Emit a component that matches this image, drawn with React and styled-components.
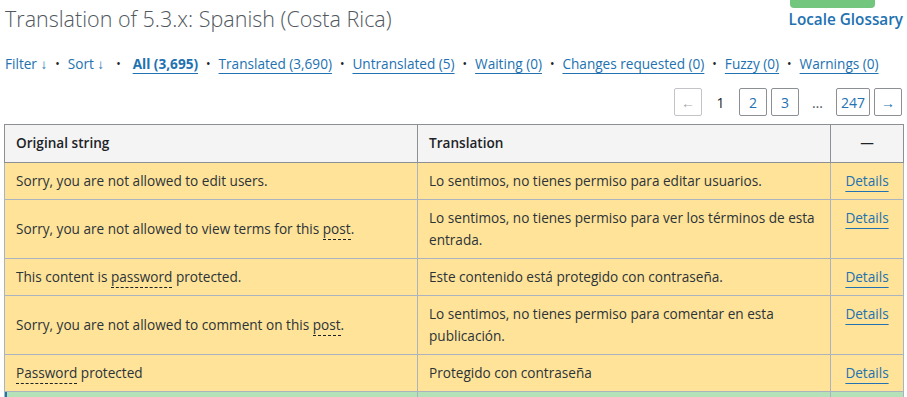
import React from 'react'
import styled, {createGlobalStyle} from 'styled-components'

const GlobalStyle = createGlobalStyle`
  body {
    margin: 0;
    background: #fff;
    font-family: "Open Sans", "Noto Sans", sans-serif;
    color: #3c434a;
  }
`

const Page = styled.div`
  padding: 0 4px;
  overflow: hidden;
  height: 397px;
`

const Head = styled.div`
  display: flex;
  justify-content: space-between;
  align-items: flex-start;
`

const Title = styled.h2`
  margin: 4px 0 0 1px;
  font-size: 21.5px;
  font-weight: 300;
  line-height: 30px;
  color: #50575e;
  white-space: nowrap;
`

const Glossary = styled.div`
  display: flex;
  flex-direction: column;
  align-items: flex-start;
  margin-right: 0;
`

const GreenTab = styled.div`
  width: 85px;
  height: 8px;
  margin-left: 1px;
  background: #72c67d;
  border-radius: 0 0 4px 4px;
`

const GlossaryLink = styled.a`
  font-size: 15.3px;
  font-weight: 600;
  line-height: 22px;
  color: #2271b1;
  text-decoration: none;
  white-space: nowrap;
`

const Filters = styled.div`
  display: flex;
  align-items: center;
  margin-top: 20px;
  padding-left: 1px;
  font-size: 13.6px;
  line-height: 20px;
  white-space: nowrap;
`

const FilterLink = styled.a`
  color: #2271b1;
  font-weight: ${p => (p.$bold ? 700 : 400)};
  text-decoration: ${p => (p.$plain ? 'none' : 'underline')};
  text-underline-offset: 4px;
  text-decoration-thickness: 1px;
`

const Dot = styled.span`
  margin: 0 ${p => p.$wide || 8}px;
  color: #1d2327;
  font-size: 12px;
`

const Pager = styled.div`
  display: flex;
  justify-content: flex-end;
  align-items: center;
  gap: 4px;
  margin-top: 14px;
  margin-right: 1px;
`

const PageButton = styled.span`
  box-sizing: border-box;
  min-width: 28px;
  height: 28px;
  padding: 0 4px;
  display: flex;
  align-items: center;
  justify-content: center;
  border: 1px solid ${p => (p.$disabled ? '#c3c4c7' : '#8c8f94')};
  border-radius: 2px;
  font-size: 14px;
  color: ${p => (p.$disabled ? '#a7aaad' : '#2271b1')};
`

const PageText = styled.span`
  width: 29px;
  text-align: center;
  font-size: 14px;
  color: ${p => (p.$muted ? '#50575e' : '#1d2327')};
`

const Table = styled.table`
  margin-top: 8px;
  width: 899px;
  border-collapse: collapse;
  table-layout: fixed;
  font-size: 13.6px;
  line-height: 22px;
  border: 1px solid #8c8f94;
`

const Th = styled.th`
  background: #f4f4f4;
  border: 1px solid #8c8f94;
  text-align: ${p => p.$align || 'left'};
  font-weight: 600;
  color: #1d2327;
  padding: 7px 11px 8px;
`

const Row = styled.tr`
  background: ${p => (p.$status === 'current' ? '#b5e1b9' : '#ffe399')};
  td:first-child {
    box-shadow: ${p => (p.$status === 'current' ? 'inset 2px 0 0 #2271b1' : 'none')};
  }
`

const Td = styled.td`
  border: 1px solid #aab3bf;
  padding: 7px 11px;
  vertical-align: ${p => p.$valign || 'top'};
  color: #2c3338;
  text-align: ${p => p.$align || 'left'};
`

const Glossed = styled.span`
  border-bottom: 1px dashed #1d2327;
  padding-bottom: 1px;
`

const Details = styled.a`
  color: #2271b1;
  text-decoration: underline;
  text-underline-offset: 5px;
  text-decoration-thickness: 1px;
`

const filters = [
  ['All (3,695)', true],
  ['Translated (3,690)'],
  ['Untranslated (5)'],
  ['Waiting (0)'],
  ['Changes requested (0)'],
  ['Fuzzy (0)'],
  ['Warnings (0)'],
]

const rows = [
  {
    original: <>Sorry, you are not allowed to edit users.</>,
    translation: 'Lo sentimos, no tienes permiso para editar usuarios.',
  },
  {
    original: <>Sorry, you are not allowed to view terms for this <Glossed>post</Glossed>.</>,
    translation: 'Lo sentimos, no tienes permiso para ver los términos de esta entrada.',
  },
  {
    original: <>This content is <Glossed>password</Glossed> protected.</>,
    translation: 'Este contenido está protegido con contraseña.',
  },
  {
    original: <>Sorry, you are not allowed to comment on this <Glossed>post</Glossed>.</>,
    translation: 'Lo sentimos, no tienes permiso para comentar en esta publicación.',
  },
  {
    original: <><Glossed>Password</Glossed> protected</>,
    translation: 'Protegido con contraseña',
  },
  {
    original: null,
    translation: null,
    status: 'current',
  },
]

export default function App() {
  return (
    <Page>
      <GlobalStyle/>
      <Head>
        <Title>Translation of 5.3.x: Spanish (Costa Rica)</Title>
        <Glossary>
          <GreenTab/>
          <GlossaryLink href="#">Locale Glossary</GlossaryLink>
        </Glossary>
      </Head>

      <Filters>
        <FilterLink $plain href="#">Filter ↓</FilterLink>
        <Dot>•</Dot>
        <FilterLink $plain href="#">Sort ↓</FilterLink>
        <Dot $wide={12}>•</Dot>
        {filters.map(([label, bold], i) => (
          <React.Fragment key={label}>
            {i > 0 && <Dot>•</Dot>}
            <FilterLink $bold={bold} href="#">{label}</FilterLink>
          </React.Fragment>
        ))}
      </Filters>

      <Pager>
        <PageButton $disabled>←</PageButton>
        <PageText>1</PageText>
        <PageButton>2</PageButton>
        <PageButton>3</PageButton>
        <PageText $muted>…</PageText>
        <PageButton>247</PageButton>
        <PageButton>→</PageButton>
      </Pager>

      <Table>
        <colgroup>
          <col style={{width: 413}}/>
          <col style={{width: 413}}/>
          <col style={{width: 73}}/>
        </colgroup>
        <thead>
          <tr>
            <Th>Original string</Th>
            <Th>Translation</Th>
            <Th $align="center">—</Th>
          </tr>
        </thead>
        <tbody>
          {rows.map((r, i) => (
            <Row key={i} $status={r.status}>
              <Td $valign="middle">{r.original || '\u00a0'}</Td>
              <Td>{r.translation || '\u00a0'}</Td>
              <Td $align="center">{r.status !== 'current' && <Details href="#">Details</Details>}</Td>
            </Row>
          ))}
        </tbody>
      </Table>
    </Page>
  )
}
